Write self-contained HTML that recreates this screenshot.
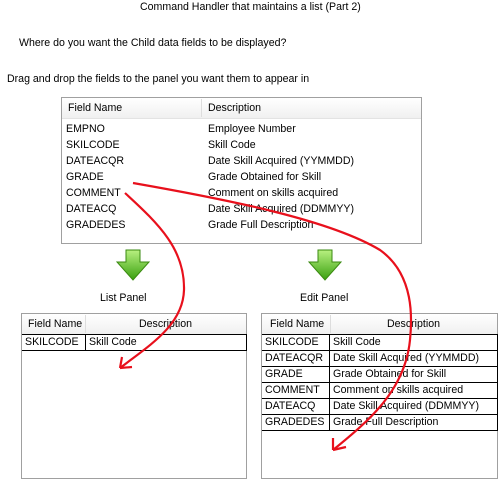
<!DOCTYPE html><html><head><style>
body{margin:0;width:504px;height:487px;background:#fff;font-family:"Liberation Sans",sans-serif;font-size:10.6px;color:#000;position:relative;overflow:hidden}
.a{position:absolute;white-space:nowrap}
.box{position:absolute;border:1px solid #a0a0a0;background:#fff}
.hdr{position:absolute;left:0;right:0;top:0;height:20px;background:linear-gradient(#fff,#f0f0f0);border-bottom:1px solid #e3e3e3}
.sep{position:absolute;top:1px;height:18px;width:1px;background:#ddd}
table{position:absolute;border-collapse:collapse;font-size:10.6px}
td{border:1px solid #000;height:15px;padding:0 0 0 3px;line-height:15px}
</style></head><body>
<div class="a" style="left:140px;top:1px">Command Handler that maintains a list (Part 2)</div>
<div class="a" style="left:19px;top:37px">Where do you want the Child data fields to be displayed?</div>
<div class="a" style="left:7px;top:73px">Drag and drop the fields to the panel you want them to appear in</div>

<div class="box" style="left:61px;top:97px;width:359px;height:145px">
<div class="hdr"></div><div class="sep" style="left:139px"></div>
<div class="a" style="left:6px;top:4px">Field Name</div><div class="a" style="left:146px;top:4px">Description</div>
<div class="a" style="left:4px;top:23px;line-height:16px">EMPNO<br>SKILCODE<br>DATEACQR<br>GRADE<br>COMMENT<br>DATEACQ<br>GRADEDES</div>
<div class="a" style="left:146px;top:23px;line-height:16px">Employee Number<br>Skill Code<br>Date Skill Acquired (YYMMDD)<br>Grade Obtained for Skill<br>Comment on skills acquired<br>Date Skill Acquired (DDMMYY)<br>Grade Full Description</div>
</div>

<svg class="a" style="left:0;top:0" width="504" height="487">
<defs><linearGradient id="g" x1="0" y1="0" x2="0" y2="1"><stop offset="0" stop-color="#b8f080"/><stop offset="1" stop-color="#3aa010"/></linearGradient></defs>
<path d="M126 250h14v12h9l-16 18-16-18h9z" fill="url(#g)" stroke="#3a8a10"/>
<path d="M318 250h14v12h9l-16 18-16-18h9z" fill="url(#g)" stroke="#3a8a10"/>
</svg>
<div class="a" style="left:100px;top:292px">List Panel</div>
<div class="a" style="left:300px;top:292px">Edit Panel</div>

<div class="box" style="left:21px;top:313px;width:224px;height:164px">
<div class="hdr"></div><div class="sep" style="left:63px"></div>
<div class="a" style="left:6px;top:4px">Field Name</div><div class="a" style="left:117px;top:4px">Description</div>
<table style="left:0;top:20px;width:225px"><tr><td style="width:60px;border-left:0">SKILCODE</td><td>Skill Code</td></tr></table>
</div>
<div class="box" style="left:261px;top:313px;width:235px;height:164px">
<div class="hdr"></div><div class="sep" style="left:68px"></div>
<div class="a" style="left:8px;top:4px">Field Name</div><div class="a" style="left:125px;top:4px">Description</div>
<table style="left:0;top:20px;width:236px">
<tr><td style="width:64px;border-left:0">SKILCODE</td><td>Skill Code</td></tr>
<tr><td style="border-left:0">DATEACQR</td><td>Date Skill Acquired (YYMMDD)</td></tr>
<tr><td style="border-left:0">GRADE</td><td>Grade Obtained for Skill</td></tr>
<tr><td style="border-left:0">COMMENT</td><td>Comment on skills acquired</td></tr>
<tr><td style="border-left:0">DATEACQ</td><td>Date Skill Acquired (DDMMYY)</td></tr>
<tr><td style="border-left:0">GRADEDES</td><td>Grade Full Description</td></tr>
</table></div>

<svg class="a" style="left:0;top:0" width="504" height="487" fill="none" stroke="#e8101c" stroke-width="2.2">
<path d="M125 193C160 225 185 250 184 290C183 325 150 345 120 368"/>
<path d="M120 368l12-1M120 368l2-11"/>
<path d="M133 183C230 200 330 220 380 250C415 275 412 320 410 340C405 390 370 420 333 450"/>
<path d="M333 450l13-3M333 450l0-12"/>
</svg>
</body></html>
